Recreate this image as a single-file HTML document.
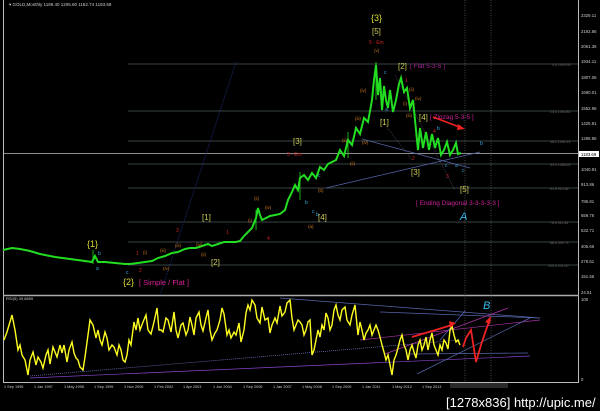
<!DOCTYPE html>
<html><head><style>
html,body{margin:0;padding:0;background:#000;width:600px;height:411px;overflow:hidden}
svg{display:block}
text{font-family:"Liberation Sans",sans-serif}
</style></head><body>
<svg width="600" height="411" viewBox="0 0 600 411" xmlns="http://www.w3.org/2000/svg">
<rect width="600" height="411" fill="#000"/>
<line x1="3.5" y1="0" x2="3.5" y2="383" stroke="#bbb" stroke-width="1"/>
<line x1="578.5" y1="0" x2="578.5" y2="383" stroke="#bbb" stroke-width="1"/>
<line x1="3" y1="295.5" x2="579" y2="295.5" stroke="#aaa" stroke-width="1.5"/>
<line x1="3" y1="382.5" x2="579" y2="382.5" stroke="#bbb" stroke-width="1"/>
<text x="9" y="6" fill="#ccc" font-size="4.5">▾ GOLD,Monthly  1189.40 1205.60 1162.74 1183.69</text>
<g stroke="#4a5a5a" stroke-width="0.8">
<line x1="128" y1="64" x2="578" y2="64"/>
<line x1="128" y1="111" x2="578" y2="111"/>
<line x1="128" y1="141" x2="578" y2="141"/>
<line x1="128" y1="164" x2="578" y2="164"/>
<line x1="128" y1="188" x2="578" y2="188"/>
<line x1="128" y1="222" x2="578" y2="222"/>
<line x1="128" y1="242" x2="578" y2="242"/>
<line x1="128" y1="265" x2="578" y2="265"/>
</g>
<line x1="3" y1="153.5" x2="578" y2="153.5" stroke="#bbb" stroke-width="0.8"/>
<g fill="#666" font-size="3.5">
<text x="552" y="66">0.0 1919.55</text><text x="550" y="113">23.6 1550.80</text><text x="550" y="143">38.2 1290.14</text><text x="550" y="166">50.0 1088.63</text><text x="550" y="190">61.8 913.86</text><text x="550" y="224">78.6 611.85</text><text x="550" y="244">88.6 449.73</text><text x="548" y="267">100.0 251.00</text>
</g>
<line x1="465" y1="0" x2="465" y2="382" stroke="#777" stroke-width="0.6" stroke-dasharray="1,1.5"/>
<line x1="491" y1="0" x2="491" y2="382" stroke="#777" stroke-width="0.6" stroke-dasharray="1,1.5"/>
<g fill="#ccc" font-size="4.3">
<text x="581" y="17">2329.11</text><text x="581" y="33">2192.86</text><text x="581" y="48">2061.36</text><text x="581" y="63">1934.11</text><text x="581" y="79">1807.06</text><text x="581" y="94">1680.01</text><text x="581" y="110">1552.96</text><text x="581" y="125">1425.91</text><text x="581" y="140">1298.86</text><text x="581" y="171">1040.91</text><text x="581" y="186">913.86</text><text x="581" y="203">786.81</text><text x="581" y="217">659.76</text><text x="581" y="232">532.71</text><text x="581" y="248">405.66</text><text x="581" y="263">278.61</text><text x="581" y="278">151.56</text><text x="581" y="294">24.51</text>
<text x="581" y="301">100</text><text x="581" y="381">0</text>
</g>
<rect x="579" y="151" width="20" height="6" fill="#fff"/>
<text x="581" y="156" fill="#000" font-size="4.3">1183.69</text>
<line x1="160" y1="295" x2="236" y2="62" stroke="#1a2a66" stroke-width="1" stroke-dasharray="1,1"/>
<line x1="362" y1="139" x2="470" y2="168" stroke="#5566aa" stroke-width="0.7"/>
<line x1="326" y1="188" x2="480" y2="152" stroke="#5566aa" stroke-width="0.7"/>
<line x1="395" y1="75" x2="455" y2="190" stroke="#556" stroke-width="0.6" stroke-dasharray="1,1"/>
<line x1="380" y1="118" x2="412" y2="160" stroke="#556" stroke-width="0.6" stroke-dasharray="1,1"/>
<polyline fill="none" stroke="#22dd22" stroke-width="2" points="3,250 12,248 20,249 30,251 40,254 55,257 70,259 85,261 92,262 95,256 98,262 105,262 115,263 125,264 130,264 138,263 145,262 152,261 158,258 165,256 172,253 178,252 185,249 190,248 196,248 202,246 208,244 212,246 218,244 224,242 230,242 236,242 240,241 244,236 248,232 252,228 256,218 258,208 260,215 262,220 266,218 270,216 275,215 280,214 285,210 288,200 292,192 295,185 298,190 300,178 304,175 308,180 312,173 316,178 320,167 324,170 328,164 332,162 336,160 340,150 344,156 348,140 352,145 356,128 360,134 364,118 368,122 372,100 374,80 376,65 378,95 380,78 382,110 384,86 386,100 388,108 390,90 393,112 396,100 399,84 401,78 404,92 407,88 410,108 413,100 416,130 418,150 420,128 423,148 426,132 429,150 432,134 435,148 438,138 441,155 444,150 447,142 450,155 453,150 456,143 458,154 461,153"/>
<g stroke="#22dd22" stroke-width="0.8">
<line x1="93" y1="250" x2="93" y2="264"/><line x1="256" y1="210" x2="256" y2="230"/><line x1="376" y1="62" x2="376" y2="100"/><line x1="300" y1="172" x2="300" y2="200"/><line x1="348" y1="132" x2="348" y2="158"/>
</g>
<g font-size="9">
<text x="371" y="21" fill="#dddd33">{3}</text>
<text x="372" y="34" fill="#cccc55" font-size="8">[5]</text>
<text x="398" y="69" fill="#cccc55" font-size="8">[2]</text>
<text x="380" y="125" fill="#cccc55" font-size="8">[1]</text>
<text x="419" y="120" fill="#cccc55" font-size="8">[4]</text>
<text x="411" y="175" fill="#cccc55" font-size="8">[3]</text>
<text x="460" y="192" fill="#cccc55" font-size="8">[5]</text>
<text x="293" y="144" fill="#cccc55" font-size="8">[3]</text>
<text x="202" y="220" fill="#cccc55" font-size="8">[1]</text>
<text x="211" y="265" fill="#cccc55" font-size="8">[2]</text>
<text x="318" y="220" fill="#cccc55" font-size="8">[4]</text>
<text x="87" y="247" fill="#dddd33">{1}</text>
<text x="123" y="285" fill="#dddd33">{2}</text>
</g>
<g font-size="6.5">
<text x="410" y="68" fill="#aa2299">[ Flat 5-3-5 ]</text>
<text x="430" y="119" fill="#cc2299">[ Zigzag 5-3-5 ]</text>
<text x="416" y="205" fill="#cc2299">[ Ending Diagonal 3-3-3-3-3 ]</text>
<text x="139" y="285" fill="#dd2299" font-size="7.5">[ Simple / Flat ]</text>
</g>
<g font-size="5" fill="#cc2222">
<text x="369" y="44">5 - Em</text><text x="287" y="156">3 - Em</text>
<text x="405" y="82">1</text><text x="433" y="133">4</text><text x="446" y="178">3</text><text x="412" y="160">2</text>
<text x="176" y="232">3</text><text x="226" y="234">1</text><text x="267" y="240">4</text><text x="136" y="255">1</text><text x="139" y="272">2</text>
</g>
<g font-size="4.5" fill="#cc7722">
<text x="374" y="52">(v)</text><text x="409" y="91">(ii)</text><text x="415" y="100">(iv)</text><text x="403" y="105">(i)</text><text x="406" y="117">(iii)</text>
<text x="355" y="120">(iii)</text><text x="360" y="92">(iv)</text><text x="342" y="142">(ii)</text><text x="362" y="144">(iv)</text><text x="350" y="165">(ii)</text>
<text x="175" y="247">(iii)</text><text x="196" y="246">(iv)</text><text x="201" y="256">(ii)</text><text x="143" y="254">(i)</text><text x="160" y="252">(iii)</text><text x="163" y="270">(iv)</text><text x="248" y="222">(i)</text><text x="254" y="200">(ii)</text><text x="265" y="209">(iv)</text>
<text x="318" y="192">(b)</text><text x="308" y="228">(a)</text>
</g>
<g font-size="5" fill="#33aadd">
<text x="384" y="74">c</text><text x="385" y="111">a</text><text x="437" y="130">b</text><text x="445" y="167">c</text><text x="455" y="167">a</text><text x="462" y="172">c</text><text x="480" y="145">b</text>
<text x="98" y="255">b</text><text x="96" y="270">a</text><text x="126" y="274">c</text><text x="305" y="204">b</text><text x="318" y="177">c</text><text x="312" y="213">c</text><text x="316" y="216">b</text>
</g>
<text x="460" y="220" fill="#33bbee" font-size="11" font-style="italic" font-family="Liberation Serif,serif">A</text>
<text x="483" y="309" fill="#33bbee" font-size="11" font-style="italic" font-family="Liberation Serif,serif">B</text>
<line x1="433" y1="117" x2="462" y2="128" stroke="#ee2222" stroke-width="1.6"/>
<polygon points="465,129 458,124 457,130" fill="#ee2222"/>
<text x="6" y="300" fill="#ccc" font-size="4">RSI(5) 39.8659</text>
<g stroke-width="0.7" fill="none">
<line x1="30" y1="376" x2="460" y2="340" stroke="#7777cc" stroke-dasharray="1,1"/>
<line x1="30" y1="378" x2="530" y2="356" stroke="#8844cc"/>
<line x1="280" y1="298" x2="540" y2="318" stroke="#5566aa"/>
<line x1="380" y1="312" x2="540" y2="318" stroke="#5566aa"/>
<line x1="360" y1="340" x2="540" y2="320" stroke="#aa33aa"/>
<line x1="385" y1="354" x2="508" y2="308" stroke="#aa33aa"/>
<line x1="417" y1="374" x2="530" y2="318" stroke="#5566aa"/>
<line x1="410" y1="354" x2="528" y2="353" stroke="#5566aa"/>
<line x1="440" y1="340" x2="465" y2="311" stroke="#5566cc"/>
</g>
<polyline fill="none" stroke="#ffff22" stroke-width="1.4" points="4,340 7,332 12,315 15,330 18,350 20,345 22,355 25,360 28,375 30,360 33,352 36,365 38,357 41,362 43,368 46,355 48,350 50,364 53,347 55,352 57,357 60,345 62,353 64,345 67,362 69,350 72,342 74,353 76,358 78,360 80,367 83,370 85,357 88,335 90,320 93,325 96,338 98,330 100,340 102,345 105,332 107,338 109,350 112,345 114,347 117,355 119,345 121,350 123,360 125,362 127,355 129,340 131,345 134,322 136,330 138,318 140,330 143,322 146,315 148,330 151,334 154,322 157,308 159,330 161,330 163,332 166,318 168,320 171,332 174,312 176,330 178,338 181,325 183,323 186,335 188,330 190,317 192,325 194,335 196,318 199,312 201,325 203,331 206,318 208,310 210,330 212,340 215,333 217,330 220,320 222,308 224,314 227,335 229,330 231,338 234,332 236,335 239,323 241,342 244,330 246,313 248,305 250,310 252,300 255,305 257,318 260,323 262,307 265,320 268,318 270,333 272,325 275,318 277,323 280,306 282,316 285,312 287,303 290,300 292,318 294,330 296,325 298,320 300,322 302,325 304,335 306,330 308,322 310,320 312,355 314,350 316,340 318,330 320,337 322,325 324,330 326,313 328,318 330,330 332,325 334,310 336,305 338,315 340,320 342,310 345,307 347,320 350,325 352,315 355,305 358,335 360,322 362,330 364,340 366,333 368,330 370,325 372,335 374,330 376,325 378,330 380,337 382,345 384,352 386,360 388,355 390,365 392,375 394,360 396,355 398,348 400,340 402,335 404,345 406,350 408,360 410,350 412,345 414,352 416,358 418,345 420,340 422,350 424,345 426,337 428,350 430,340 432,333 434,345 436,350 438,355 440,345 442,350 444,340 446,343 448,349 450,330 452,326 454,335 456,342 458,340 460,345"/>
<line x1="412" y1="337" x2="452" y2="325" stroke="#ee2222" stroke-width="1.8"/>
<polygon points="456,323 449,321 450,328" fill="#ee2222"/>
<polyline fill="none" stroke="#ee2222" stroke-width="1.8" points="463,347 466,338 471,330 476,362 481,345 486,330 489,322"/>
<polygon points="491,316 485,322 490,324" fill="#ee2222"/>
<g fill="#ccc" font-size="3.8">
<text x="4" y="388">1 Sep 1995</text><text x="34" y="388">1 Jan 1997</text><text x="64" y="388">1 May 1998</text><text x="94" y="388">1 Sep 1999</text><text x="124" y="388">1 Nov 2000</text><text x="154" y="388">1 Feb 2002</text><text x="183" y="388">1 Apr 2003</text><text x="213" y="388">1 Jun 2004</text><text x="243" y="388">1 Sep 2005</text><text x="273" y="388">1 Jan 2007</text><text x="302" y="388">1 May 2008</text><text x="332" y="388">1 Sep 2009</text><text x="362" y="388">1 Jan 2011</text><text x="392" y="388">1 May 2012</text><text x="422" y="388">1 Sep 2013</text>
</g>
<rect x="450" y="383" width="58" height="5" fill="#2a2a2a"/>
<text x="446" y="407" fill="#fff" font-size="13">[1278x836] http://upic.me/</text>
</svg>
</body></html>
